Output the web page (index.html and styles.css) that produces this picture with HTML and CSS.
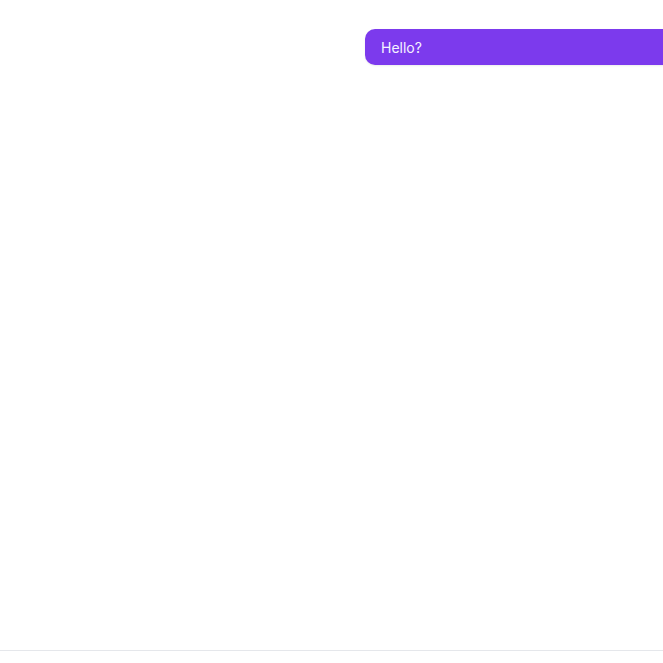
FILE: index.html
```html
<!DOCTYPE html>
<html>
<head>
<meta charset="utf-8">
<link rel="stylesheet" href="styles.css">
</head>
<body>
<div class="app">
  <div class="messages">
    <div class="row">
      <div class="bubble">Hello?</div>
    </div>
  </div>
  <div class="composer"></div>
</div>
</body>
</html>
```
FILE: styles.css
```css
html, body {
  margin: 0;
  padding: 0;
  background: #ffffff;
  overflow: hidden;
}
.app {
  width: 663px;
  height: 663px;
  display: flex;
  flex-direction: column;
  font-family: Inter, "Liberation Sans", sans-serif;
  overflow: hidden;
}
.messages {
  flex: 1;
  padding-top: 29px;
}
.row {
  display: flex;
  padding-left: 365px;
}
.bubble {
  flex: 0 0 340px;
  box-sizing: border-box;
  height: 36px;
  display: flex;
  align-items: center;
  padding: 0 16px;
  background: #7c3aed;
  color: #f5f3ff;
  font-size: 14px;
  border-radius: 10px;
  box-shadow: 0 1px 2px rgba(0,0,0,0.08);
}
.composer {
  height: 12px;
  border-top: 1px solid #e5e7eb;
}
```
